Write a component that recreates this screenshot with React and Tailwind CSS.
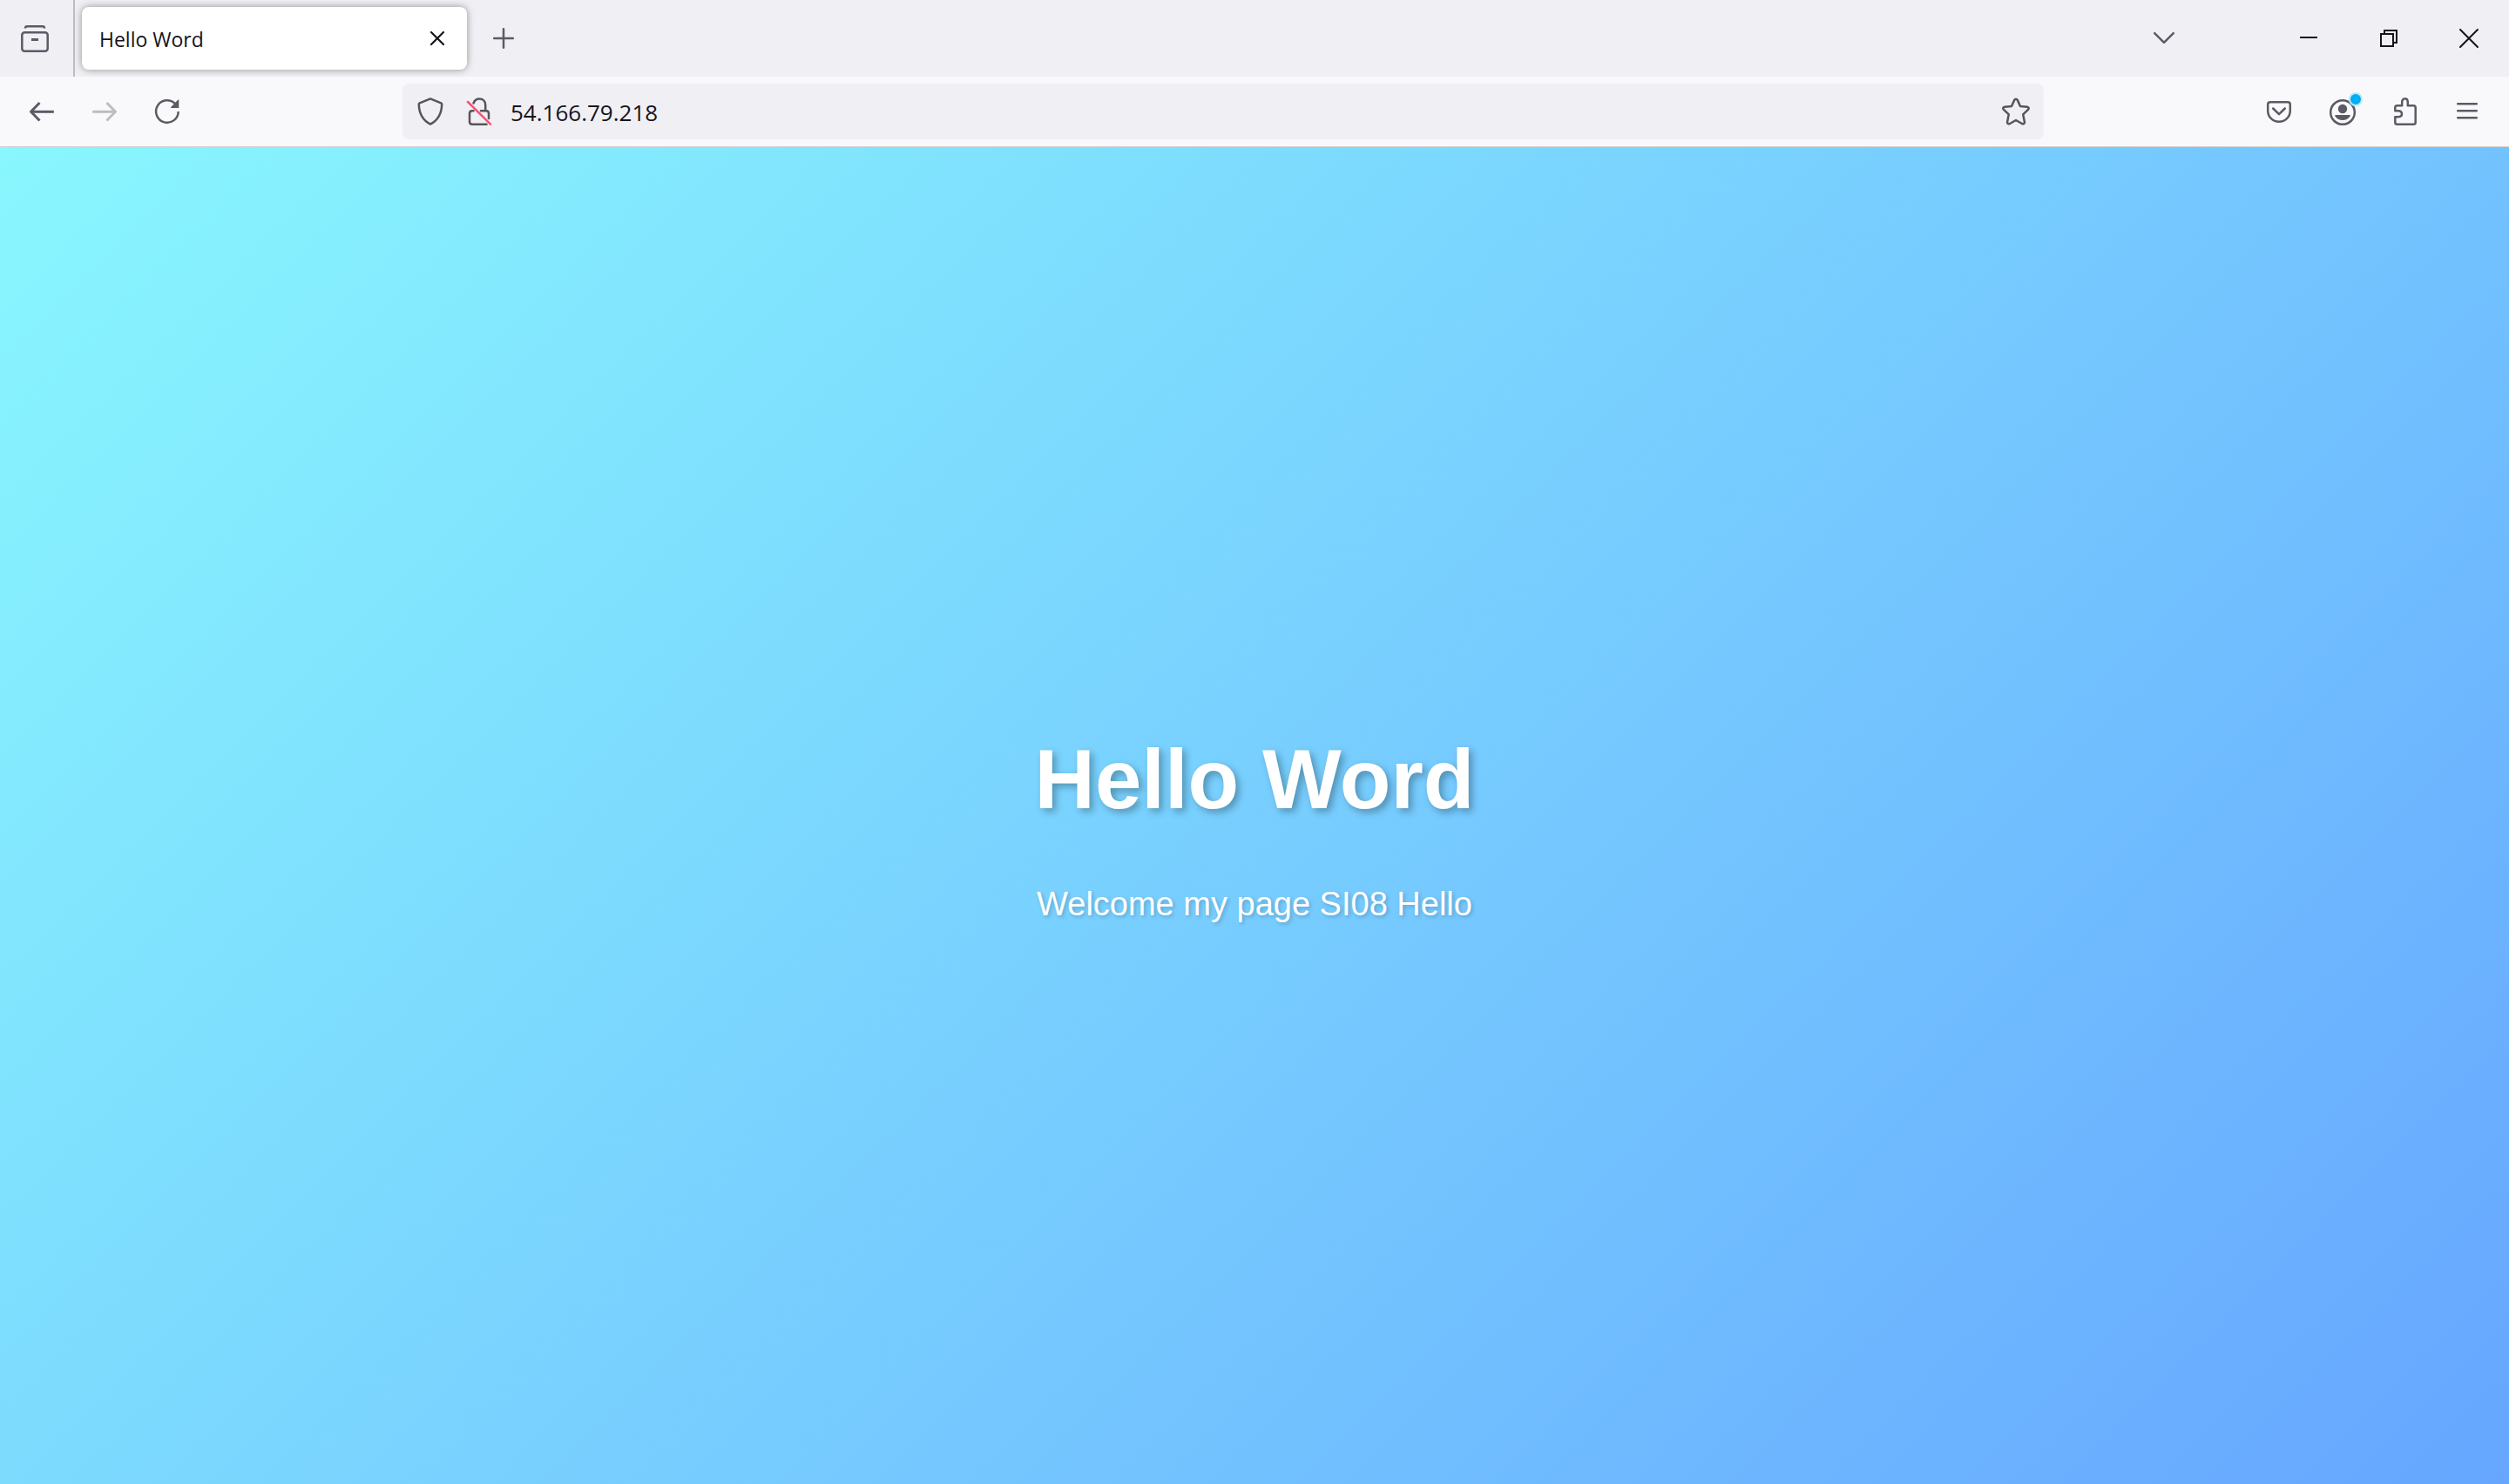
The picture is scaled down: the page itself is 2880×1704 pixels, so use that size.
function Icon({ className = "size-8", children, ...rest }) {
  return (
    <svg
      viewBox="0 0 32 32"
      className={className}
      fill="none"
      stroke="currentColor"
      strokeWidth="2.5"
      strokeLinecap="round"
      strokeLinejoin="round"
      aria-hidden="true"
      {...rest}
    >
      {children}
    </svg>
  );
}

const ArchiveIcon = () => (
  <Icon>
    <path d="M5 4.500C5 3 6 2.300 7.200 2.300H24.800C26 2.300 27 3 27 4.500" strokeLinecap="butt" />
    <rect x="1.300" y="9.300" width="29.400" height="21.400" rx="3" />
    <path d="M12 17.500H20" strokeLinecap="butt" strokeWidth="3" />
  </Icon>
);

const BackIcon = () => (
  <Icon strokeWidth="3">
    <path d="M29.800 16.300H4" strokeLinecap="butt" />
    <path d="M13.500 6 3.500 16.300 13.500 26.500" strokeLinecap="butt" />
  </Icon>
);

const ForwardIcon = () => (
  <Icon strokeWidth="3">
    <path d="M2.200 16.300H28" strokeLinecap="butt" />
    <path d="M18.500 6 28.500 16.300 18.500 26.500" strokeLinecap="butt" />
  </Icon>
);

const ReloadIcon = () => (
  <Icon>
    <path d="M28.700 16A12.800 12.800 0 1 1 24.800 6.800" strokeLinecap="butt" />
    <path d="M29.300 2.800V12H20.600C20 12 19.800 11.400 20.200 11L28.400 2.600C28.800 2.200 29.300 2.400 29.300 2.800Z" fill="currentColor" stroke="none" />
  </Icon>
);

const ShieldIcon = () => (
  <Icon>
    <path d="M16 1.400 28.300 6.300C29 6.600 29.300 7.200 29.200 8C28.900 17.500 26 25.500 16 30.600C6 25.500 3.100 17.500 2.800 8C2.700 7.200 3 6.600 3.700 6.300Z" />
  </Icon>
);

const InsecureIcon = () => (
  <Icon>
    <path d="M9.500 6.500C10.500 3.500 13 1.400 16.300 1.400C20.300 1.400 23.200 4.300 23.200 8.300V15" />
    <path d="M9.500 15.200H8C6 15.200 5 16.200 5 18.200V27.700C5 29.700 6 30.700 8 30.700H24.500" />
    <path d="M18 15.200H24C26 15.200 27 16.200 27 18.200V24" />
    <path d="M3 5 29 30.700" stroke="#ff4f75" />
  </Icon>
);

const StarIcon = () => (
  <Icon>
    <path d="M14.200 2.900C14.900 1.400 17.100 1.400 17.800 2.900L21 10.100 29 10.700C30.700 10.900 31.300 12.800 30 13.900L24.200 19.300 25.900 28C26.200 29.700 24.500 30.900 23 30L16 26 9 30C7.500 30.900 5.800 29.700 6.100 28L7.800 19.300 2 13.900C.7 12.800 1.300 10.900 3 10.700L11 10.100Z" />
  </Icon>
);

const PocketIcon = () => (
  <Icon>
    <path d="M6 5.200H26C28 5.200 28.800 6.200 28.800 8V15C28.800 22.500 23 27.800 16 27.800C9 27.800 3.200 22.500 3.200 15V8C3.200 6.200 4 5.200 6 5.200Z" />
    <path d="M9.200 12.500 16 19.200 22.800 12.500" />
  </Icon>
);

const AccountIcon = () => (
  <Icon>
    <circle cx="17" cy="17" r="13.800" />
    <circle cx="17" cy="13" r="5.200" fill="currentColor" stroke="none" />
    <path d="M9.200 20H24.800C25.800 20 26.200 20.800 25.600 21.600C21.500 27.600 12.500 27.600 8.400 21.600C7.800 20.800 8.200 20 9.200 20Z" fill="currentColor" stroke="none" />
  </Icon>
);

const PuzzleIcon = () => (
  <Icon>
    <path d="M5.300 14V11.500C5.300 10 6.200 9.200 7.600 9.200H13.200V5.300C13.200 2.900 14.600 1.300 16.500 1.300S19.800 2.900 19.800 5.300V9.200H26.400C27.900 9.200 28.700 10 28.700 11.500V28.400C28.700 29.900 27.900 30.700 26.400 30.700H7.600C6.100 30.700 5.300 29.900 5.300 28.400V22.200H9C11.400 22.200 13 20.800 13 18.800S11.400 15.200 9 15.200H5.300Z" />
  </Icon>
);

const MenuIcon = () => (
  <Icon>
    <path d="M5.200 7.200H26.800M5.200 15.200H26.800M5.200 23.200H26.800" />
  </Icon>
);

const PlusIcon = () => (
  <Icon>
    <path d="M16 5.200V26.800M5.200 16H26.800" />
  </Icon>
);

const ChevronIcon = () => (
  <Icon>
    <path d="M5.200 10.200 16 20.800 26.800 10.200" />
  </Icon>
);

const TabCloseIcon = () => (
  <Icon>
    <path d="M9 9 23 23M23 9 9 23" strokeWidth="2.200" />
  </Icon>
);

const MinimizeIcon = () => (
  <Icon strokeWidth="2" shapeRendering="crispEdges">
    <path d="M6 15H26" strokeLinecap="butt" />
  </Icon>
);

const RestoreIcon = () => (
  <Icon strokeWidth="2" strokeLinejoin="miter" strokeLinecap="butt">
    <path d="M7 11H21V25H7Z" />
    <path d="M11 10V7H25V21H22" />
  </Icon>
);

const WindowCloseIcon = () => (
  <Icon strokeWidth="2">
    <path d="M6 6 26 26M26 6 6 26" />
  </Icon>
);

function ToolButton({ label, className = "text-[#5b5b66]", children, disabled }) {
  return (
    <button
      type="button"
      aria-label={label}
      disabled={disabled}
      className={`flex h-16 w-18 shrink-0 items-center justify-center rounded-lg ${className}`}
    >
      {children}
    </button>
  );
}

function WindowButton({ label, children }) {
  return (
    <button type="button" aria-label={label} className="flex w-23 items-center justify-center self-stretch text-[#15141a]">
      {children}
    </button>
  );
}

function TabStrip() {
  return (
    <div className="flex h-22 items-center bg-[#f0eff4]">
      <button
        type="button"
        aria-label="Recent browsing"
        className="flex w-[86px] items-center justify-center self-stretch border-r-2 border-[#bdbcc2] pr-1 text-[#5b5b66]"
      >
        <ArchiveIcon />
      </button>
      <div
        role="tab"
        aria-selected="true"
        className="ml-2 flex h-18 w-[442px] items-center justify-between rounded-lg bg-white pr-2.5 pl-5 text-[#15141a] shadow-[0_0_8px_rgba(0,0,0,0.4)]"
      >
        <span className="pt-0.5 text-[23px]">Hello Word</span>
        <button type="button" aria-label="Close tab" className="flex size-12 items-center justify-center">
          <TabCloseIcon />
        </button>
      </div>
      <div className="ml-1.5 flex">
        <ToolButton label="New tab">
          <PlusIcon />
        </ToolButton>
      </div>
      <div className="ml-auto flex items-center self-stretch">
        <div className="mr-21">
          <ToolButton label="List all tabs">
            <ChevronIcon />
          </ToolButton>
        </div>
        <WindowButton label="Minimize">
          <MinimizeIcon />
        </WindowButton>
        <WindowButton label="Restore">
          <RestoreIcon />
        </WindowButton>
        <WindowButton label="Close">
          <WindowCloseIcon />
        </WindowButton>
      </div>
    </div>
  );
}

function AddressBar() {
  return (
    <div className="flex h-16 items-center rounded-lg bg-[#f0eff4] px-4 text-[#55555a]">
      <button type="button" aria-label="Tracking protection">
        <ShieldIcon />
      </button>
      <button type="button" aria-label="Connection not secure" className="ml-6">
        <InsecureIcon />
      </button>
      <input
        type="text"
        aria-label="Address"
        defaultValue="54.166.79.218"
        className="ml-5 min-w-0 grow bg-transparent pt-0.5 text-[26px] text-[#15141a] outline-none"
      />
      <button type="button" aria-label="Bookmark this page">
        <StarIcon />
      </button>
    </div>
  );
}

function Toolbar() {
  return (
    <div className="flex items-center border-b border-[#cccccc] bg-[#f9f9fb] px-3 py-2">
      <ToolButton label="Back">
        <BackIcon />
      </ToolButton>
      <ToolButton label="Forward" disabled className="text-[#bdbdc2]">
        <ForwardIcon />
      </ToolButton>
      <ToolButton label="Reload">
        <ReloadIcon />
      </ToolButton>
      <div className="grow-[39] basis-0" />
      <div className="grow-[314] basis-0">
        <AddressBar />
      </div>
      <div className="grow-[39] basis-0" />
      <ToolButton label="Save to Pocket">
        <PocketIcon />
      </ToolButton>
      <ToolButton label="Account">
        <span className="relative">
          <AccountIcon />
          <span className="absolute -top-1.5 -right-2 size-4 rounded-full border-2 border-[#b5ebfd] bg-[#00aef5]" />
        </span>
      </ToolButton>
      <ToolButton label="Extensions">
        <PuzzleIcon />
      </ToolButton>
      <ToolButton label="Open menu">
        <MenuIcon />
      </ToolButton>
    </div>
  );
}

export default function App() {
  return (
    <div className="flex min-h-screen flex-col font-['Open_Sans','Noto_Sans',sans-serif]">
      <header>
        <TabStrip />
        <Toolbar />
      </header>
      <main className="flex grow flex-col items-center justify-center gap-[66px] bg-[linear-gradient(135deg,#89f7fe,#66a6ff)] pt-[26px] text-center font-['Liberation_Sans',Arial,sans-serif] text-white">
        <h1 className="text-8xl leading-[110px] font-bold [text-shadow:4px_4px_8px_rgba(0,0,0,0.3)]">Hello Word</h1>
        <p className="text-[38px] leading-11 [text-shadow:2px_2px_4px_rgba(0,0,0,0.2)]">Welcome my page SI08 Hello</p>
      </main>
    </div>
  );
}
